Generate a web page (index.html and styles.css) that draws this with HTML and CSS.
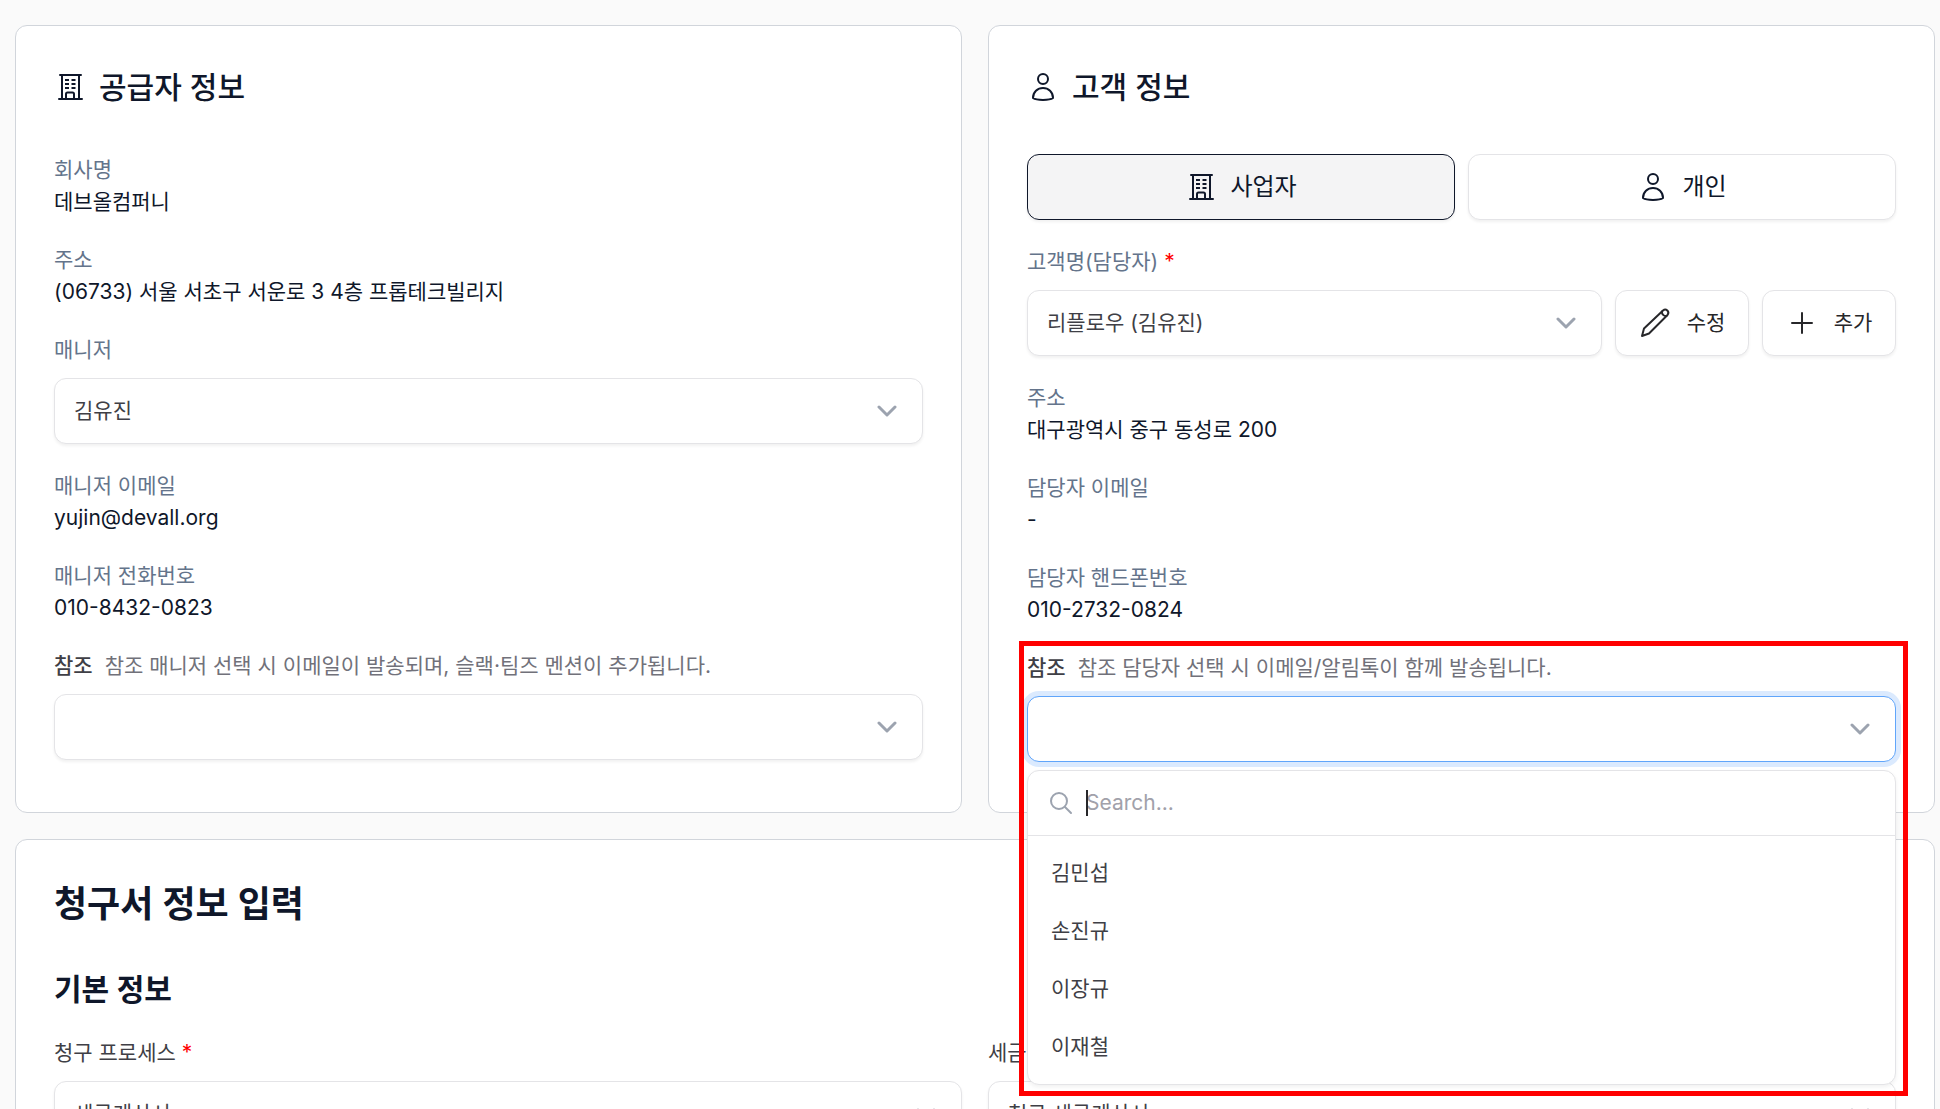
FILE: index.html
```html
<!DOCTYPE html>
<html lang="ko">
<head>
	<meta charset="utf-8">
	<meta name="viewport" content="width=device-width, initial-scale=1.0">
	<title>청구서 작성</title>
	<link rel="stylesheet" href="styles.css">
</head>

<body>
	<!-- shared icons -->
	<svg class="sprite" aria-hidden="true">
		<symbol id="building" viewBox="0 0 32 32">
			<path d="M6 4h21M5 28h23M8 4v24M25 4v24M12 28v-5q0-1.500 1.500-1.500h5q1.500 0 1.500 1.500v5"/>
			<path stroke-linecap="butt" d="M11 9h4M17.500 9h4M11 13h4M17.500 13h4M11 17h4M17.500 17h4"/>
		</symbol>
		<symbol id="person" viewBox="0 0 32 32">
			<circle cx="16" cy="8" r="5"/>
			<path d="M6 27C6 21 10.500 17 16 17s10 4 10 10C22.500 29.500 9.500 29.500 6 27z"/>
		</symbol>
		<symbol id="pencil" viewBox="0 0 32 32">
			<path d="M3 29l2-7.500L24 3.500c3-2.500 7 1 4.500 4.500L10 26.500z"/>
			<path d="M23 4.500c-.5 2.500 2 5 4.500 4.500"/>
		</symbol>
		<symbol id="plus" viewBox="0 0 32 32"><path d="M16 6v20M6 16h20"/></symbol>
		<symbol id="chevron" viewBox="0 0 20 12"><path d="M2 2l8 8 8-8"/></symbol>
		<symbol id="search" viewBox="0 0 24 24"><circle cx="10" cy="10" r="8"/><path d="M16 16l6 6"/></symbol>
	</svg>

	<main class="page">
		<section class="card">
			<h2 class="card-title"><svg class="icon"><use href="#building"/></svg>공급자 정보</h2>
			<div class="fields">
				<dl class="info"><dt>회사명</dt><dd>데브올컴퍼니</dd></dl>
				<dl class="info"><dt>주소</dt><dd>(06733) 서울 서초구 서운로 3 4층 프롭테크빌리지</dd></dl>
				<div class="field">
					<label class="muted" for="manager">매니저</label>
					<div class="select">
						<select id="manager"><option>김유진</option></select>
						<svg><use href="#chevron"/></svg>
					</div>
				</div>
				<dl class="info"><dt>매니저 이메일</dt><dd>yujin@devall.org</dd></dl>
				<dl class="info"><dt>매니저 전화번호</dt><dd>010-8432-0823</dd></dl>
				<div class="field">
					<label for="manager-cc"><b>참조</b><span class="hint">참조 매니저 선택 시 이메일이 발송되며, 슬랙·팀즈 멘션이 추가됩니다.</span></label>
					<div class="select">
						<select id="manager-cc"><option></option></select>
						<svg><use href="#chevron"/></svg>
					</div>
				</div>
			</div>
		</section>

		<section class="card">
			<h2 class="card-title"><svg class="icon"><use href="#person"/></svg>고객 정보</h2>
			<div class="fields">
				<div class="toggle">
					<button type="button" class="active"><svg class="icon"><use href="#building"/></svg>사업자</button>
					<button type="button"><svg class="icon"><use href="#person"/></svg>개인</button>
				</div>
				<div class="field">
					<label class="muted" for="customer">고객명(담당자) <span class="required">*</span></label>
					<div class="row">
						<div class="select">
							<select id="customer"><option>리플로우 (김유진)</option></select>
							<svg><use href="#chevron"/></svg>
						</div>
						<button type="button" class="btn"><svg class="icon"><use href="#pencil"/></svg>수정</button>
						<button type="button" class="btn"><svg class="icon"><use href="#plus"/></svg>추가</button>
					</div>
				</div>
				<dl class="info"><dt>주소</dt><dd>대구광역시 중구 동성로 200</dd></dl>
				<dl class="info"><dt>담당자 이메일</dt><dd>-</dd></dl>
				<dl class="info"><dt>담당자 핸드폰번호</dt><dd>010-2732-0824</dd></dl>
				<div class="field open">
					<label for="customer-cc"><b>참조</b><span class="hint">참조 담당자 선택 시 이메일/알림톡이 함께 발송됩니다.</span></label>
					<div class="select focused">
						<select id="customer-cc"><option></option></select>
						<svg><use href="#chevron"/></svg>
					</div>
					<div class="dropdown">
						<div class="search">
							<svg><use href="#search"/></svg>
							<span class="caret"></span>
							<input type="text" placeholder="Search..." aria-label="Search">
						</div>
						<ul>
							<li>김민섭</li>
							<li>손진규</li>
							<li>이장규</li>
							<li>이재철</li>
						</ul>
					</div>
					<div class="highlight"></div>
				</div>
			</div>
		</section>

		<section class="card wide">
			<h1>청구서 정보 입력</h1>
			<h2>기본 정보</h2>
			<div class="columns">
				<div class="field">
					<label for="process">청구 프로세스 <span class="required">*</span></label>
					<div class="select">
						<select id="process"><option>세금계산서</option></select>
						<svg><use href="#chevron"/></svg>
					</div>
				</div>
				<div class="field">
					<label for="tax">세금</label>
					<div class="select">
						<select id="tax"><option>청구 세금계산서</option></select>
						<svg><use href="#chevron"/></svg>
					</div>
				</div>
			</div>
		</section>
	</main>
</body>
</html>
```
FILE: styles.css
```css
* { box-sizing: border-box; }
body {
	background-color: #fafafa; color: #0f172a; font-family: Inter, 'Noto Sans CJK KR', sans-serif; font-size: 21px; line-height: 32px; height: 100vh; margin: 0; overflow: hidden;
}
h1, h2, dl, dd, ul { margin: 0; padding: 0; }
svg { fill: none; stroke: currentColor; stroke-width: 2; stroke-linecap: round; stroke-linejoin: round; flex: none; }
select, button, input { font: inherit; color: inherit; }
.sprite { display: none; }
.icon { width: 32px; height: 32px; }

.page { display: grid; grid-template-columns: 1fr 1fr; gap: 26px; padding: 25px 5px 0 15px; }
.card { background: #fff; border: 1px solid #d1d5db; border-radius: 12px; padding: 39px 38px 50px; }
.wide { grid-column: 1 / 3; }

h1 { font-size: 36px; line-height: 50px; font-weight: 600; margin-bottom: 38px; }
h2 { font-size: 30px; line-height: 44px; font-weight: 600; margin-bottom: 26px; }
.card-title { display: flex; align-items: center; gap: 13px; font-weight: 500; margin-bottom: 45px; }

.fields { display: flex; flex-direction: column; gap: 26px; }
.field { display: flex; flex-direction: column; gap: 12px; color: #3f3f46; }
.field b { font-weight: 500; margin-right: 12px; }
.info dt, .field .muted { color: #64748b; }
.hint { color: #71717a; }
.required { color: #f00; }
.columns { display: grid; grid-template-columns: 1fr 1fr; gap: 26px; }

/* form controls */
.select, .btn, .toggle button { height: 66px; background: #fff; border: 1px solid #e4e4e7; border-radius: 12px; box-shadow: 0 2px 3px rgba(0, 0, 0, .06); }
.select { display: flex; align-items: center; flex: 1 0 auto; padding-right: 25px; color: #3f3f46; }
.select select { appearance: none; flex: 1; height: 64px; padding: 0 19px; border: 0; background: none; outline: 0; }
.select svg { width: 20px; height: 12px; color: #9ca3af; stroke-width: 3; }
.row, .toggle { display: flex; gap: 13px; }
.btn { display: flex; align-items: center; justify-content: center; gap: 16px; width: 134px; padding: 0; color: #27272a; }
.toggle button { display: flex; flex: 1; align-items: center; justify-content: center; gap: 13px; font-size: 24px; }
.toggle .active { background: #f4f4f5; border-color: #0f172a; }

/* open dropdown */
.open { position: relative; }
.select.focused { border-color: #60a5fa; box-shadow: 0 0 0 5px #dbeafe; }
.dropdown { position: absolute; top: 118px; left: 0; right: 0; background: #fff; border: 1px solid #e4e4e7; border-radius: 12px; box-shadow: 0 2px 4px rgba(0, 0, 0, .06); }
.search { position: relative; display: flex; align-items: center; gap: 13px; height: 65px; padding: 0 21px; border-bottom: 1px solid #e4e4e7; }
.search svg { width: 24px; height: 24px; color: #9ca3af; }
.search input { flex: 1; border: 0; padding: 0; background: none; outline: 0; }
.search input::placeholder { color: #a1a1aa; opacity: 1; }
.caret { position: absolute; left: 58px; width: 2px; height: 26px; background: #27272a; }
.dropdown ul { list-style: none; padding: 8px 23px; }
.dropdown li { line-height: 58px; }
.highlight { position: absolute; top: -11px; left: -8px; right: -12px; height: 455px; border: 5px solid #f00; pointer-events: none; }
```
